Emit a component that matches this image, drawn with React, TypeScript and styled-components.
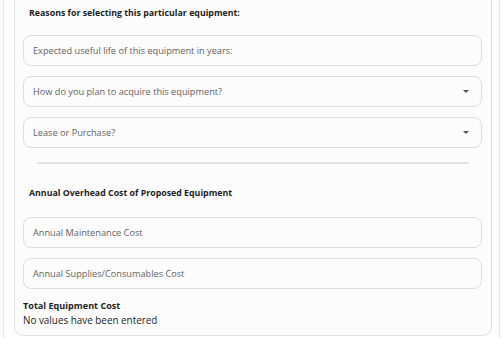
import React from "react";
import styled, { createGlobalStyle } from "styled-components";

const Global = createGlobalStyle`
  html, body { margin: 0; padding: 0; background: #ffffff; }
  body { font-family: "Open Sans", "Liberation Sans", sans-serif; overflow: hidden; }
  * { box-sizing: border-box; }
`;

const Outer = styled.div`
  margin: 0 4px 0 3px;
  height: 338px;
  border-left: 1px solid #e6e6e6;
  border-right: 1px solid #e6e6e6;
  padding: 0 7px 2px 10px;
  background: #fdfdfd;
`;

const Card = styled.div`
  height: 336px;
  border: 1px solid #e2e2e2;
  border-top: none;
  border-radius: 0 0 9px 9px;
  background: #fcfcfc;
  padding: 0 9px 0 8px;
  display: flex;
  flex-direction: column;
`;

const SectionTitle = styled.div<{ $top: number; $bottom: number }>`
  font-size: 8.8px;
  font-weight: 700;
  color: #1e1e1e;
  padding-left: 6px;
  margin-top: ${(p) => p.$top}px;
  margin-bottom: ${(p) => p.$bottom}px;
  line-height: 14px;
  white-space: nowrap;
`;

const FieldList = styled.div`
  display: flex;
  flex-direction: column;
  gap: 10px;
`;

const Field = styled.div`
  height: 31px;
  border: 1px solid #dedede;
  border-radius: 8px;
  background: #fcfcfc;
  display: flex;
  align-items: center;
  justify-content: space-between;
  padding: 0 9px 0 9px;
  font-size: 9.2px;
  color: #646464;
  white-space: nowrap;
`;

const Caret = styled.span`
  width: 0;
  height: 0;
  border-left: 3px solid transparent;
  border-right: 3px solid transparent;
  border-top: 3px solid #555;
  margin-right: 3px;
`;

const Divider = styled.hr`
  margin: 14px 13px 0 14px;
  border: none;
  height: 2px;
  background: #e3e3e3;
`;

const Summary = styled.div`
  margin-top: 10px;
  color: #1e1e1e;
  line-height: 14px;
`;

const SummaryLabel = styled.div`
  font-size: 9.1px;
  font-weight: 700;
`;

const SummaryValue = styled.div`
  font-size: 9.9px;
`;

export default function App() {
  return (
    <>
      <Global />
      <Outer>
        <Card>
          <SectionTitle $top={6} $bottom={15}>
            Reasons for selecting this particular equipment:
          </SectionTitle>
          <FieldList>
            <Field>Expected useful life of this equipment in years:</Field>
            <Field>
              How do you plan to acquire this equipment?
              <Caret />
            </Field>
            <Field>
              Lease or Purchase?
              <Caret />
            </Field>
          </FieldList>
          <Divider />
          <SectionTitle $top={22} $bottom={17}>
            Annual Overhead Cost of Proposed Equipment
          </SectionTitle>
          <FieldList>
            <Field>Annual Maintenance Cost</Field>
            <Field>Annual Supplies/Consumables Cost</Field>
          </FieldList>
          <Summary>
            <SummaryLabel>Total Equipment Cost</SummaryLabel>
            <SummaryValue>No values have been entered</SummaryValue>
          </Summary>
        </Card>
      </Outer>
    </>
  );
}
